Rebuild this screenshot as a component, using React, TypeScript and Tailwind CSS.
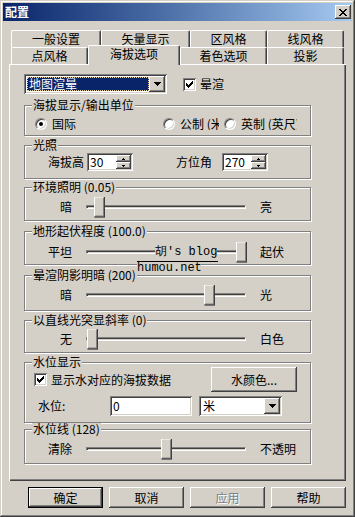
import React from 'react';

const RAISED =
  'shadow-[inset_-1px_-1px_#404040,inset_1px_1px_#ffffff,inset_-2px_-2px_#808080,inset_2px_2px_#d4d0c8]';
const SUNKEN =
  'shadow-[inset_1px_1px_#808080,inset_-1px_-1px_#ffffff,inset_2px_2px_#404040,inset_-2px_-2px_#d4d0c8]';

const ArrowDown = () => (
  <svg width="7" height="4" viewBox="0 0 7 4" shapeRendering="crispEdges">
    <path d="M0 0h7v1h-1v1h-1v1h-1v1h-1v-1h-1v-1h-1v-1h-1z" fill="#000" />
  </svg>
);

const TinyArrow = ({ up }: { up?: boolean }) => (
  <svg width="3" height="2" viewBox="0 0 3 2" shapeRendering="crispEdges">
    {up ? <path d="M1 0h1v1h1v1h-3v-1h1z" fill="#000" /> : <path d="M0 0h3v1h-1v1h-1v-1h-1z" fill="#000" />}
  </svg>
);

const CheckMark = () => (
  <svg width="7" height="7" viewBox="0 0 7 7" shapeRendering="crispEdges">
    <path
      d="M6 0h1v1h-1z M5 1h2v1h-2z M0 2h1v1h-1z M4 2h3v1h-3z M0 3h2v1h-2z M3 3h3v1h-3z M0 4h5v1h-5z M1 5h3v1h-3z M2 6h1v1h-1z"
      fill="#000"
    />
  </svg>
);

const CloseIcon = () => (
  <svg width="8" height="7" viewBox="0 0 8 7" shapeRendering="crispEdges">
    <path
      d="M0 0h2v1h-2z M6 0h2v1h-2z M1 1h2v1h-2z M5 1h2v1h-2z M2 2h4v1h-4z M3 3h2v1h-2z M2 4h4v1h-4z M1 5h2v1h-2z M5 5h2v1h-2z M0 6h2v1h-2z M6 6h2v1h-2z"
      fill="#000"
    />
  </svg>
);

const Check = ({ checked }: { checked?: boolean }) => (
  <div className={`w-[13px] h-[13px] shrink-0 bg-white flex items-center justify-center ${SUNKEN}`}>
    {checked && <CheckMark />}
  </div>
);

const Radio = ({ checked }: { checked?: boolean }) => (
  <div className="w-[12px] h-[12px] shrink-0 rounded-full bg-white border border-t-[#808080] border-l-[#808080] border-r-white border-b-white shadow-[inset_1px_1px_#404040,inset_-1px_-1px_#d4d0c8] flex items-center justify-center">
    {checked && <div className="w-[4px] h-[4px] rounded-full bg-black" />}
  </div>
);

const Combo = ({ w, children }: { w: string; children: React.ReactNode }) => (
  <div className={`flex h-[20px] bg-white p-[2px] ${SUNKEN} ${w}`}>
    <div className="flex-1 flex items-center overflow-hidden">{children}</div>
    <div className={`w-[16px] h-full flex items-center justify-center bg-[#d4d0c8] ${RAISED}`}>
      <ArrowDown />
    </div>
  </div>
);

const Spin = ({ value }: { value: string }) => (
  <div className={`flex w-[46px] h-[18px] bg-white p-[2px] ${SUNKEN}`}>
    <div className="flex-1 leading-[14px] pl-[1px]">{value}</div>
    <div className="flex flex-col w-[15px]">
      <div className={`h-[7px] bg-[#d4d0c8] flex items-center justify-center ${RAISED}`}>
        <TinyArrow up />
      </div>
      <div className={`h-[7px] bg-[#d4d0c8] flex items-center justify-center ${RAISED}`}>
        <TinyArrow />
      </div>
    </div>
  </div>
);

const Group = ({ label, cls, children }: { label: string; cls: string; children: React.ReactNode }) => (
  <div className={`w-[287px] border border-[#808080] shadow-[inset_1px_1px_#ffffff,1px_1px_#ffffff] ${cls}`}>
    <div className="-mt-[7px] ml-[7px] w-fit px-[1px] bg-[#d4d0c8] leading-[12px] whitespace-nowrap">{label}</div>
    {children}
  </div>
);

const Slider = ({ left, right, pos, cls }: { left: string; right: string; pos: number; cls: string }) => (
  <div className={`flex items-center h-[21px] ${cls}`}>
    <div className="w-[47px] text-right">{left}</div>
    <div className="relative ml-[14px] w-[160px] h-[4px] border border-t-[#808080] border-l-[#808080] border-r-white border-b-white shadow-[inset_1px_1px_#404040,inset_-1px_-1px_#d4d0c8]">
      <div
        className={`absolute top-1/2 -translate-y-1/2 w-[11px] h-[21px] bg-[#d4d0c8] ${RAISED}`}
        style={{ left: pos - 1 }}
      />
    </div>
    <div className="ml-[14px] whitespace-nowrap">{right}</div>
  </div>
);

const Tab = ({ w, label, sel }: { w: string; label: string; sel?: boolean }) =>
  sel ? (
    <div
      className={`relative top-[1px] z-10 h-[20px] ${w} bg-[#d4d0c8] border-t border-l border-r border-t-white border-l-white border-r-[#404040] rounded-t-[2px] shadow-[inset_-1px_0_#808080] flex items-center justify-center pb-[3px]`}
    >
      {label}
    </div>
  ) : (
    <div
      className={`h-[17px] ${w} border-t border-l border-r border-t-white border-l-white border-r-[#404040] rounded-t-[2px] shadow-[inset_-1px_0_#808080] flex items-center justify-center`}
    >
      {label}
    </div>
  );

const Btn = ({ label, def, disabled }: { label: string; def?: boolean; disabled?: boolean }) => (
  <div
    className={`w-[75px] h-[21px] flex items-center justify-center bg-[#d4d0c8] ${
      def
        ? 'border border-black shadow-[inset_-1px_-1px_#404040,inset_1px_1px_#ffffff,inset_-2px_-2px_#808080]'
        : RAISED
    } ${disabled ? 'text-[#808080] [text-shadow:1px_1px_#ffffff]' : ''}`}
  >
    {label}
  </div>
);

export default function App() {
  return (
    <div className="w-[355px] h-[517px] bg-[#d4d0c8] p-[3px] flex flex-col text-[12px] leading-[12px] text-black font-['Noto_Sans_CJK_SC',sans-serif] shadow-[inset_-1px_-1px_#404040,inset_1px_1px_#d4d0c8,inset_-2px_-2px_#808080,inset_2px_2px_#ffffff]">
      {/* title bar */}
      <div className="h-[18px] flex items-center justify-between bg-linear-to-r from-[#0a246a] to-[#a6caf0] pl-[2px] pr-[1px]">
        <span className="text-white font-bold">配置</span>
        <div className={`w-[16px] h-[14px] bg-[#d4d0c8] flex items-center justify-center ${RAISED}`}>
          <CloseIcon />
        </div>
      </div>

      {/* tabs */}
      <div className="mt-[9px] pl-[8px]">
        <div className="flex h-[17px]">
          <Tab w="w-[90px]" label="一般设置" />
          <Tab w="w-[89px]" label="矢量显示" />
          <Tab w="w-[77px]" label="区风格" />
          <Tab w="w-[77px]" label="线风格" />
        </div>
        <div className="flex h-[17px] items-end">
          <Tab w="w-[77px]" label="点风格" />
          <Tab w="w-[92px]" label="海拔选项" sel />
          <Tab w="w-[87px]" label="着色选项" />
          <Tab w="w-[77px]" label="投影" />
        </div>
      </div>

      {/* panel */}
      <div className="relative ml-[6px] w-[337px] h-[417px] pt-[10px] pl-[15px] shadow-[inset_1px_1px_#ffffff,inset_-1px_-1px_#404040,inset_-2px_-2px_#808080]">
        <div className="flex items-center h-[20px]">
          <Combo w="w-[143px]">
            <div className="ml-[1px] flex-1 h-[14px] bg-[#0a246a] text-white border border-dotted border-[#e8d49a] leading-[12px] pl-[1px]">
              地图渲晕
            </div>
          </Combo>
          <div className="ml-[16px]">
            <Check checked />
          </div>
          <span className="ml-[4px]">晕渲</span>
        </div>

        <Group label="海拔显示/输出单位" cls="h-[31px] mt-[11px]">
          <div className="mt-[6px] flex items-center h-[13px] pl-[10px] whitespace-nowrap">
            <div className="flex items-center w-[128px]">
              <Radio checked />
              <span className="ml-[5px]">国际</span>
            </div>
            <div className="flex items-center w-[56px] overflow-hidden">
              <Radio />
              <span className="ml-[5px]">公制 (米)</span>
            </div>
            <div className="ml-[5px] flex items-center w-[73px] overflow-hidden">
              <Radio />
              <span className="ml-[5px]">英制 (英尺)</span>
            </div>
          </div>
        </Group>

        <Group label="光照" cls="h-[34px] mt-[9px]">
          <div className="mt-[2px] flex items-center h-[18px] pl-[23px]">
            <span>海拔高</span>
            <div className="ml-[3px]">
              <Spin value="30" />
            </div>
            <span className="ml-[43px]">方位角</span>
            <div className="ml-[10px]">
              <Spin value="270" />
            </div>
          </div>
        </Group>

        <Group label="环境照明 (0.05)" cls="h-[34px] mt-[8px]">
          <Slider left="暗" right="亮" pos={8} cls="mt-[3px]" />
        </Group>

        <Group label="地形起伏程度 (100.0)" cls="h-[34px] mt-[10px]">
          <Slider left="平坦" right="起伏" pos={150} cls="mt-[4px]" />
        </Group>

        <Group label="晕渲阴影明暗 (200)" cls="h-[36px] mt-[10px]">
          <Slider left="暗" right="光" pos={118} cls="mt-[3px]" />
        </Group>

        <Group label="以直线光突显斜率 (0)" cls="h-[33px] mt-[9px]">
          <Slider left="无" right="白色" pos={1} cls="mt-[2px]" />
        </Group>

        <Group label="水位显示" cls="h-[61px] mt-[9px]">
          <div className="-mt-[1px] flex items-center h-[25px] pl-[9px] pr-[13px]">
            <Check checked />
            <span className="ml-[4px]">显示水对应的海拔数据</span>
            <div className={`ml-auto w-[86px] h-[25px] flex items-center justify-center bg-[#d4d0c8] ${RAISED}`}>
              水颜色...
            </div>
          </div>
          <div className="mt-[4px] flex items-center h-[20px] pl-[13px]">
            <span className="w-[72px]">水位:</span>
            <div className={`w-[82px] h-[20px] bg-white p-[2px] ${SUNKEN}`}>
              <div className="pl-[1px] leading-[16px]">0</div>
            </div>
            <div className="ml-[7px]">
              <Combo w="w-[83px]">
                <span className="pl-[2px]">米</span>
              </Combo>
            </div>
          </div>
        </Group>

        <Group label="水位线 (128)" cls="h-[35px] mt-[6px]">
          <Slider left="清除" right="不透明" pos={75} cls="mt-[3px]" />
        </Group>

        {/* blog watermark over the picture */}
        <div className="absolute left-[146px] top-[181px] h-[14px] w-[62px] bg-[#d4d0c8] font-['Liberation_Mono',monospace] text-[12px] leading-[14px] whitespace-nowrap">
          胡's blog
        </div>
        <div className="absolute left-[128px] top-[197px] w-[81px] h-[1px] bg-black" />
        <div className="absolute left-[128px] top-[198px] h-[12px] w-[64px] bg-[#d4d0c8] font-['Liberation_Mono',monospace] text-[12px] leading-[12px] whitespace-nowrap">
          humou.net
        </div>
      </div>

      {/* buttons */}
      <div className="mt-[6px] ml-[25px] flex gap-[6px]">
        <Btn label="确定" def />
        <Btn label="取消" />
        <Btn label="应用" disabled />
        <Btn label="帮助" />
      </div>
    </div>
  );
}
